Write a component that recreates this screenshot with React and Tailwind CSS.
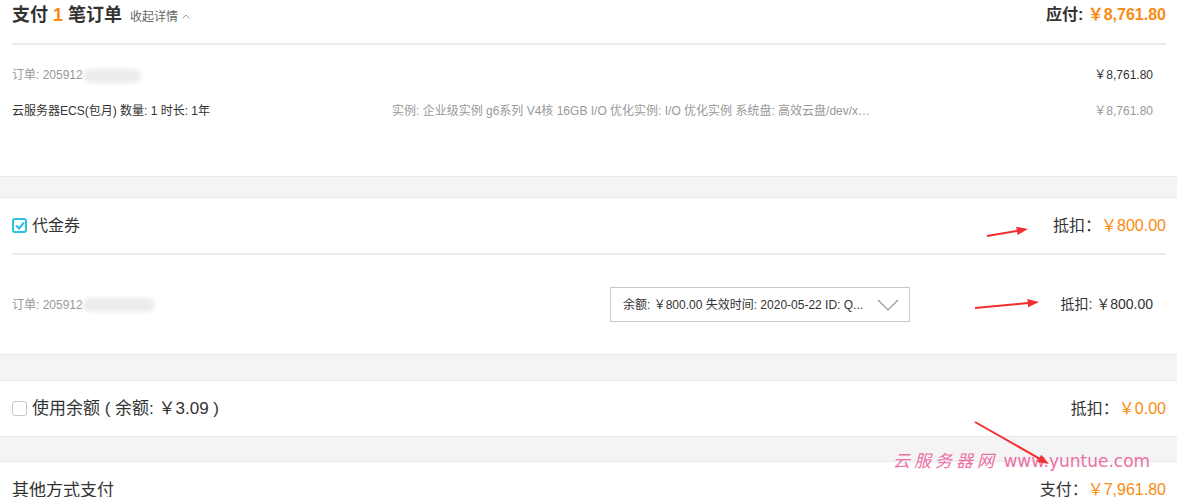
import React from 'react';

const font = { fontFamily: '"Liberation Sans", "Noto Sans CJK SC", sans-serif' };

const Blur = ({ w }) => (
    <span className={`inline-block h-[14px] ${w} rounded-full bg-[#ececec] blur-[2px] align-middle`} />
);

const Check = ({ checked }) =>
    checked ? (
        <span className="w-[15px] h-[15px] rounded-[3px] border-2 border-[#2cc0e0] flex items-center justify-center bg-white">
            <svg width="10" height="9" viewBox="0 0 10 9">
                <path d="M1 4.5 L4 7.5 L9 1.5" fill="none" stroke="#2cc0e0" strokeWidth="2" />
            </svg>
        </span>
    ) : (
        <span className="w-[15px] h-[15px] rounded-[3px] border border-[#c8c8c8] bg-white" />
    );

const Arrow = ({ className, x1, y1, x2, y2, w, h }) => {
    const ang = Math.atan2(y2 - y1, x2 - x1);
    const len = 12;
    const p1 = [x2 - len * Math.cos(ang - 0.35), y2 - len * Math.sin(ang - 0.35)];
    const p2 = [x2 - len * Math.cos(ang + 0.35), y2 - len * Math.sin(ang + 0.35)];
    return (
        <svg className={`absolute pointer-events-none ${className}`} width={w} height={h}>
            <line x1={x1} y1={y1} x2={x2 - 6 * Math.cos(ang)} y2={y2 - 6 * Math.sin(ang)} stroke="#f03030" strokeWidth="2" />
            <polygon points={`${x2},${y2} ${p1[0]},${p1[1]} ${p2[0]},${p2[1]}`} fill="#f03030" />
        </svg>
    );
};

export default function App() {
    return (
        <div className="relative w-[1177px] h-[497px] overflow-hidden bg-[#f4f4f4] text-[#333]" style={font}>
            {/* Order summary */}
            <section className="bg-white h-[177px] border-b border-[#e9e9e9] pl-3">
                <div className="h-[30px] flex items-center justify-between pr-[11px] mb-[13px]">
                    <div className="flex items-baseline gap-2">
                        <h1 className="text-[18px] font-bold">
                            支付 <span className="text-[#f98a12]">1</span> 笔订单
                        </h1>
                        <span className="text-[12px] text-[#666]">
                            收起详情
                            <svg className="inline ml-1 mb-[2px]" width="8" height="5" viewBox="0 0 8 5">
                                <path d="M0.5 4.5 L4 1 L7.5 4.5" fill="none" stroke="#999" strokeWidth="1" />
                            </svg>
                        </span>
                    </div>
                    <div className="text-[16px] font-bold">
                        应付: <span className="text-[#f98a12]">￥8,761.80</span>
                    </div>
                </div>
                <div className="h-[2px] bg-[#ebebeb] mr-[11px]" />
                <div className="pr-[24px] text-[12px]">
                    <div className="mt-[20px] h-[20px] flex items-center justify-between">
                        <span className="text-[#999]">
                            订单: 205912<Blur w="w-[58px]" />
                        </span>
                        <span>￥8,761.80</span>
                    </div>
                    <div className="mt-[16px] h-[20px] flex items-center">
                        <span className="w-[380px]">云服务器ECS(包月) 数量: 1 时长: 1年</span>
                        <span className="w-[484px] truncate text-[#999]">
                            实例: 企业级实例 g6系列 V4核 16GB I/O 优化实例: I/O 优化实例 系统盘: 高效云盘/dev/xvda
                        </span>
                        <span className="flex-1 text-right text-[#999]">￥8,761.80</span>
                    </div>
                </div>
            </section>

            {/* Voucher */}
            <section className="mt-[20px] bg-white h-[158px] border-y border-[#e9e9e9] pl-3">
                <div className="h-[55px] flex items-center justify-between pr-[11px]">
                    <label className="flex items-center gap-[5px] text-[16px]">
                        <Check checked />
                        代金券
                    </label>
                    <div className="text-[16px]">
                        抵扣：<span className="text-[#f98a12]">￥800.00</span>
                    </div>
                </div>
                <div className="h-[2px] bg-[#ebebeb] mr-[11px]" />
                <div className="h-[99px] flex items-center pr-[24px] text-[12px]">
                    <span className="flex-1 text-[#999]">
                        订单: 205912<Blur w="w-[72px]" />
                    </span>
                    <div className="w-[300px] h-[35px] border border-[#c8c8c8] flex items-center justify-between pl-3 pr-[10px]">
                        <span>余额: ￥800.00 失效时间: 2020-05-22 ID: Q...</span>
                        <svg width="22" height="12" viewBox="0 0 22 12">
                            <path d="M1 1 L11 11 L21 1" fill="none" stroke="#999" strokeWidth="1.2" />
                        </svg>
                    </div>
                    <div className="w-[243px] text-right text-[14px]">抵扣: ￥800.00</div>
                </div>
            </section>

            {/* Balance */}
            <section className="mt-[25px] bg-white h-[57px] border-y border-[#e9e9e9] pl-3 pr-[11px] flex items-center justify-between">
                <label className="flex items-center gap-[5px] text-[17px]">
                    <Check />
                    使用余额 ( 余额:  ￥3.09 )
                </label>
                <div className="text-[16px]">
                    抵扣：<span className="text-[#f98a12]">￥0.00</span>
                </div>
            </section>

            {/* Other payment */}
            <section className="mt-[24px] bg-white h-[60px] border-t border-[#e9e9e9] pl-3 pr-[11px] flex items-start justify-between pt-[16px]">
                <span className="text-[17px]">其他方式支付</span>
                <div className="text-[16px]">
                    支付：<span className="text-[#f98a12]">￥7,961.80</span>
                </div>
            </section>

            {/* Annotations */}
            <Arrow className="left-[980px] top-[222px]" w={55} h={20} x1={7} y1={14} x2={48} y2={7} />
            <Arrow className="left-[970px] top-[294px]" w={75} h={20} x1={5} y1={14} x2={69} y2={8} />
            <div
                className="absolute left-[893px] top-[449px] text-[17px] text-[#ec6fa5] whitespace-nowrap"
                style={{ fontFamily: '"DejaVu Sans", "Noto Sans CJK SC", sans-serif' }}
            >
                <span className="tracking-[4px] italic">云服务器网</span> www.yuntue.com
            </div>
            <Arrow className="left-[970px] top-[418px]" w={85} h={52} x1={5} y1={4} x2={79} y2={46} />
        </div>
    );
}
